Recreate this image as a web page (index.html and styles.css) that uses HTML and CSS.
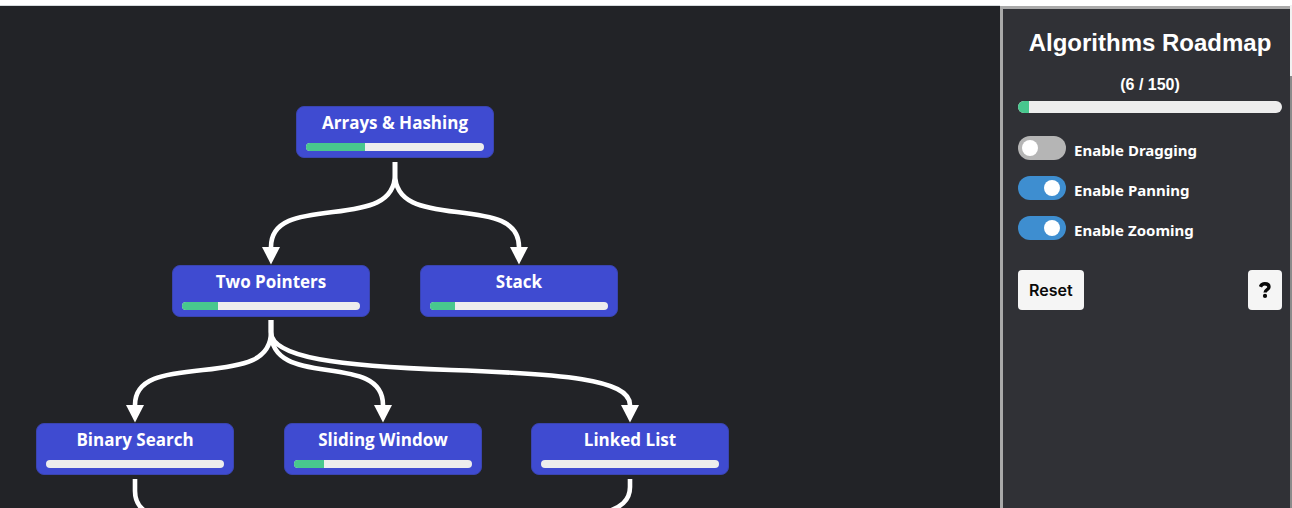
FILE: index.html
```html
<!DOCTYPE html>
<html lang="en">
<head>
<meta charset="utf-8">
<title>Algorithms Roadmap</title>
<link rel="stylesheet" href="styles.css">
</head>
<body>
<div class="app">
  <main class="canvas">
    <svg class="edges" aria-hidden="true">
      <defs>
        <marker id="arrow" markerUnits="userSpaceOnUse" markerWidth="18" markerHeight="18" refX="0" refY="9" orient="90">
          <path d="M0 0L17.5 9L0 18Z" fill="#fff"/>
        </marker>
      </defs>
      <g fill="none" stroke="#fff" stroke-width="4.6">
        <path marker-end="url(#arrow)" d="M395 156V168C395 197 368 202 333 206S271 214 271 241"/>
        <path marker-end="url(#arrow)" d="M395 156V168C395 197 422 202 457 206S519 214 519 241"/>
        <path marker-end="url(#arrow)" d="M271 314V326C271 355 243 360 203 364S135 372 135 399"/>
        <path marker-end="url(#arrow)" d="M271 314V326C271 355 298 360 327 364S383 372 383 399"/>
        <path marker-end="url(#arrow)" d="M271 314V326C271 352 340 360 451 364S630 373 630 399"/>
        <path d="M135 473V485C135 514 170 518 258 522"/>
        <path d="M630 473V481C630 494 622 502 600 508"/>
      </g>
    </svg>
    <button type="button" class="node arrays"><span class="name">Arrays &amp; Hashing</span><span class="bar"><span class="fill" style="width:33.3%"></span></span></button>
    <button type="button" class="node pointers"><span class="name">Two Pointers</span><span class="bar"><span class="fill" style="width:20%"></span></span></button>
    <button type="button" class="node stack"><span class="name">Stack</span><span class="bar"><span class="fill" style="width:14.3%"></span></span></button>
    <button type="button" class="node search"><span class="name">Binary Search</span><span class="bar"></span></button>
    <button type="button" class="node window"><span class="name">Sliding Window</span><span class="bar"><span class="fill" style="width:16.7%"></span></span></button>
    <button type="button" class="node list"><span class="name">Linked List</span><span class="bar"></span></button>
  </main>
  <aside class="panel">
    <h1 class="title">Algorithms Roadmap</h1>
    <p class="count">(6 / 150)</p>
    <div class="bar total"><span class="fill" style="width:4%"></span></div>
    <div class="options">
      <label class="option"><input class="switch" type="checkbox"><span class="label">Enable Dragging</span></label>
      <label class="option"><input class="switch" type="checkbox" checked><span class="label">Enable Panning</span></label>
      <label class="option"><input class="switch" type="checkbox" checked><span class="label">Enable Zooming</span></label>
    </div>
    <div class="actions">
      <button type="button" class="btn">Reset</button>
      <button type="button" class="btn help" aria-label="Help">
        <svg width="12" height="16" viewBox="0 0 12 16" aria-hidden="true"><path d="M1.4 4.8C2.2 2.7 3.7 1.7 5.8 1.7C8.2 1.7 10 2.9 10 5C10 7.8 6.1 7.4 6.1 10.6" fill="none" stroke="#0a0a0a" stroke-width="3.4"/><circle cx="6" cy="13.9" r="2.1" fill="#0a0a0a"/></svg>
      </button>
    </div>
  </aside>
  <div class="scroll" aria-hidden="true"><div class="thumb"></div></div>
</div>
</body>
</html>
```
FILE: styles.css
```css
* { box-sizing: border-box; }

body {
  margin: 0;
  background: #fff;
  font-family: "Noto Sans", "Open Sans", sans-serif;
  color: #fff;
}

.app {
  display: flex;
  height: 100vh;
  padding-top: 5px;
  overflow: hidden;
}

.canvas {
  position: relative;
  flex: 1;
  overflow: hidden;
  background: #222327;
  border-top: 1px solid #d5dadd;
}

.edges {
  position: absolute;
  inset: 0;
  width: 100%;
  height: 100%;
}

.node {
  position: absolute;
  display: flex;
  flex-direction: column;
  gap: 8px;
  width: 198px;
  padding: 4px 9px 6px;
  border: 1px solid #3a44b0;
  border-radius: 8px;
  background: #3f4bd1;
  color: #fff;
  font: 700 17px/24px "Open Sans", "Noto Sans", sans-serif;
}

.name { text-align: center; }

.arrays { left: 296px; top: 100px; }
.pointers { left: 172px; top: 259px; }
.stack { left: 420px; top: 259px; }
.search { left: 36px; top: 417px; }
.window { left: 284px; top: 417px; }
.list { left: 531px; top: 417px; }

.bar {
  display: block;
  height: 8px;
  border-radius: 6px;
  overflow: hidden;
  background: #ededed;
}

.fill {
  display: block;
  height: 100%;
  background: #48c78e;
}

.panel {
  width: 290px;
  margin-top: 1px;
  padding: 20px 8px 16px 15px;
  border-top: 3px solid #a9a9a9;
  border-left: 3px solid #a9a9a9;
  background: #303136;
}

.title {
  margin: 0;
  font: 700 24px/28px "Liberation Sans", Arial, sans-serif;
  text-align: center;
}

.count {
  margin: 16px 0 4px;
  font: 700 16px/24px "Liberation Sans", Arial, sans-serif;
  text-align: center;
}

.total { height: 12px; }

.options {
  display: grid;
  gap: 16px;
  margin-top: 23px;
}

.option {
  display: flex;
  gap: 8px;
  height: 24px;
}

.switch {
  appearance: none;
  display: flex;
  width: 48px;
  height: 24px;
  margin: 0;
  padding: 4px 6px 4px 4px;
  border-radius: 12px;
  background: #b5b5b5;
}

.switch::before {
  content: "";
  width: 16px;
  height: 16px;
  border-radius: 50%;
  background: #fff;
}

.switch:checked {
  justify-content: flex-end;
  background: #3e8ed0;
}

.label {
  padding-top: 2px;
  font-size: 15px;
  line-height: 24px;
  font-weight: 700;
}

.actions {
  display: flex;
  justify-content: space-between;
  margin-top: 30px;
}

.btn {
  display: flex;
  align-items: center;
  height: 40px;
  padding: 0 11px;
  border: 0;
  border-radius: 4px;
  background: #f5f5f5;
  color: #0a0a0a;
  font: 600 16px/24px Inter, "Liberation Sans", sans-serif;
}

.scroll {
  width: 2px;
  padding-top: 71px;
  background: #f1f1f1;
}

.thumb {
  height: 100%;
  background: #8b8b8b;
}
```
